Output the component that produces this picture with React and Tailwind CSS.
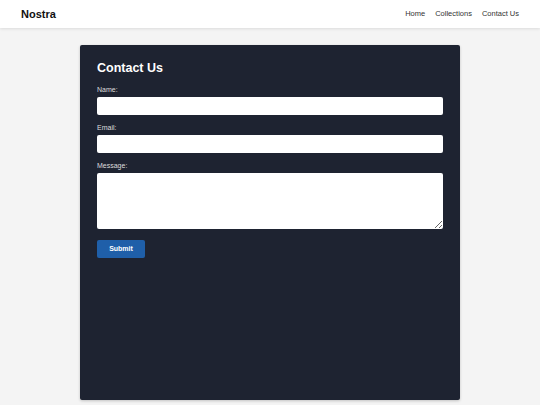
export default function App() {
  return (
    <div className="min-h-[405px] bg-[#f4f4f4] font-['Liberation_Sans',Arial,sans-serif]">
      <header className="h-[28px] bg-white shadow-[0_1px_3px_rgba(0,0,0,0.1)] flex items-center justify-between pl-[21px] pr-[21px]">
        <h1 className="text-[11px] font-bold text-[#111]">Nostra</h1>
        <nav className="flex gap-[10px] text-[7.5px]">
          <a href="#" className="text-[#333] no-underline">Home</a>
          <a href="#" className="text-[#333] no-underline">Collections</a>
          <a href="#" className="text-[#333] no-underline">Contact Us</a>
        </nav>
      </header>
      <main className="flex justify-center pt-[17px] pb-[5px]">
        <div className="w-[380px] h-[355px] bg-[#1e2331] rounded-[2px] shadow-[0_1px_3px_rgba(0,0,0,0.2)] px-[17px] pt-[16px] text-white">
          <h2 className="text-[12.5px] font-bold leading-[15px] mb-[10px]">Contact Us</h2>
          <form className="flex flex-col" onSubmit={(e) => e.preventDefault()}>
            <label className="text-[7px] leading-[8px] text-[#ddd] mb-[3px]">Name:</label>
            <input className="h-[18px] bg-white rounded-[2px] mb-[9px]" />
            <label className="text-[7px] leading-[8px] text-[#ddd] mb-[3px]">Email:</label>
            <input className="h-[18px] bg-white rounded-[2px] mb-[9px]" />
            <label className="text-[7px] leading-[8px] text-[#ddd] mb-[3px]">Message:</label>
            <textarea className="h-[56px] bg-white rounded-[2px] mb-[11px]" />
            <button className="w-[48px] h-[18px] bg-[#1f5fa9] rounded-[2px] text-[7px] font-bold text-white">Submit</button>
          </form>
        </div>
      </main>
    </div>
  );
}
